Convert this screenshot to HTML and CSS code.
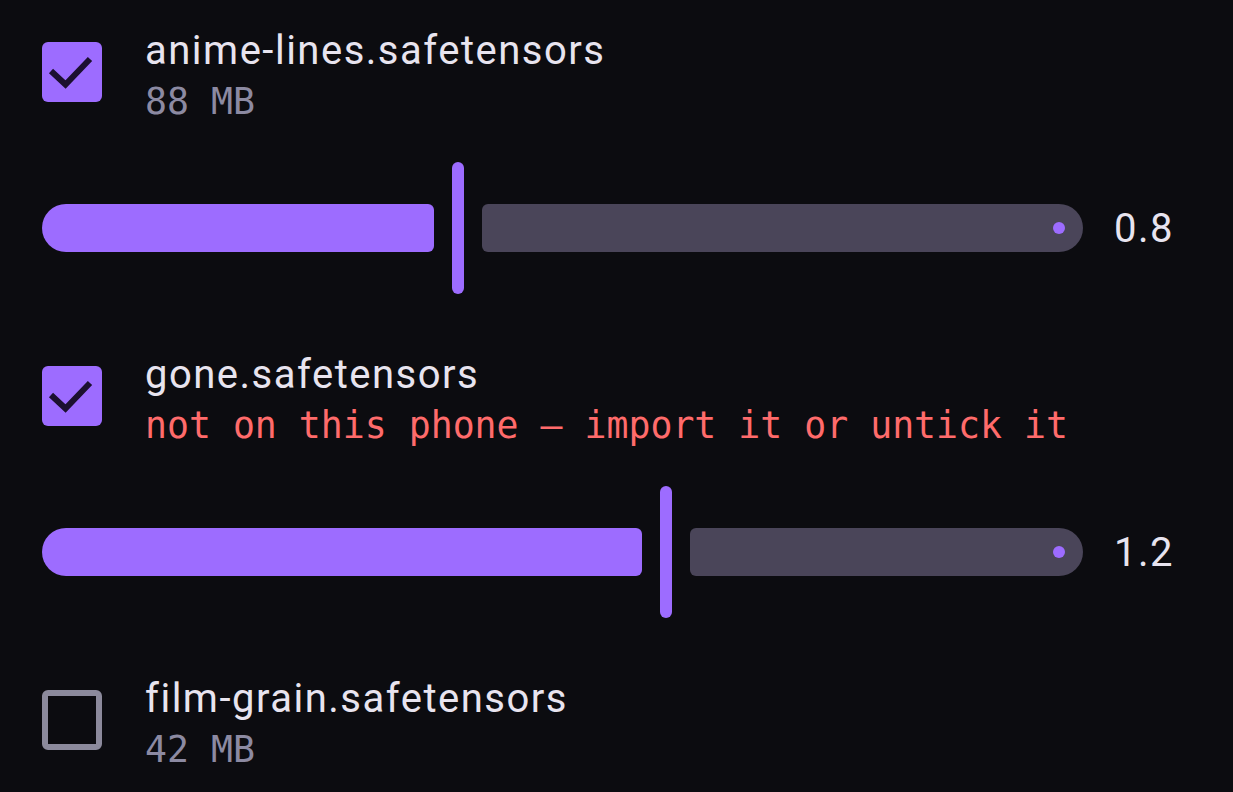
FILE: index.html
```html
<!DOCTYPE html>
<html>
<head>
<meta charset="utf-8">
<link rel="stylesheet" href="styles.css">
</head>
<body>
<div class="list">
  <div class="item">
    <div class="row">
      <div class="box checked">
        <svg viewBox="0 0 60 60" width="60" height="60"><path d="M9 29 L23.5 42.5 L48 17" fill="none" stroke="#1c1030" stroke-width="6"/></svg>
      </div>
      <div class="text">
        <div class="title">anime-lines.safetensors</div>
        <div class="sub">88 MB</div>
      </div>
    </div>
    <div class="slider">
      <div class="track">
        <div class="active" style="width:392px"></div>
        <div class="thumb"></div>
        <div class="inactive"><span class="stop"></span></div>
      </div>
      <div class="value">0.8</div>
    </div>
  </div>

  <div class="item">
    <div class="row">
      <div class="box checked">
        <svg viewBox="0 0 60 60" width="60" height="60"><path d="M9 29 L23.5 42.5 L48 17" fill="none" stroke="#1c1030" stroke-width="6"/></svg>
      </div>
      <div class="text">
        <div class="title">gone.safetensors</div>
        <div class="sub error">not on this phone — import it or untick it</div>
      </div>
    </div>
    <div class="slider">
      <div class="track">
        <div class="active" style="width:600px"></div>
        <div class="thumb"></div>
        <div class="inactive"><span class="stop"></span></div>
      </div>
      <div class="value">1.2</div>
    </div>
  </div>

  <div class="item">
    <div class="row">
      <div class="box"></div>
      <div class="text">
        <div class="title">film-grain.safetensors</div>
        <div class="sub">42 MB</div>
      </div>
    </div>
  </div>
</div>
</body>
</html>
```

FILE: styles.css
```css
html, body {
  margin: 0;
  padding: 0;
  background: #0c0c10;
  height: 100%;
  overflow: hidden;
}
.list {
  padding: 27px 0 0 42px;
  display: flex;
  flex-direction: column;
  gap: 57px;
}
.item {
  display: flex;
  flex-direction: column;
  gap: 36px;
}
.row {
  display: flex;
  align-items: flex-start;
  gap: 43px;
}
.box {
  width: 60px;
  height: 60px;
  margin-top: 15px;
  box-sizing: border-box;
  border-radius: 6px;
  border: 6px solid #8c8a9c;
  flex: none;
}
.box.checked {
  border: none;
  background: #9d6cff;
}
.box svg {
  display: block;
}
.text {
  display: flex;
  flex-direction: column;
}
.title {
  font-family: Roboto, "Noto Sans", sans-serif;
  font-size: 40px;
  letter-spacing: 1.5px;
  line-height: 48px;
  color: #e8e4ef;
}
.sub {
  font-family: "DejaVu Sans Mono", monospace;
  font-size: 36.5px;
  line-height: 48px;
  padding-top: 3px;
  color: #8c8aa2;
}
.sub.error {
  color: #ff6b6b;
}
.slider {
  display: flex;
  align-items: center;
  padding-right: 41px;
}
.track {
  flex: 1;
  height: 132px;
  display: flex;
  align-items: center;
}
.active {
  height: 48px;
  background: #9d6cff;
  border-radius: 24px 6px 6px 24px;
  flex: none;
}
.thumb {
  width: 12px;
  height: 132px;
  border-radius: 6px;
  background: #9d6cff;
  margin: 0 18px;
  flex: none;
}
.inactive {
  flex: 1;
  height: 48px;
  background: #4a4559;
  border-radius: 6px 24px 24px 6px;
  display: flex;
  align-items: center;
  justify-content: flex-end;
  padding-right: 18px;
  box-sizing: border-box;
}
.stop {
  width: 12px;
  height: 12px;
  border-radius: 50%;
  background: #9d6cff;
}
.value {
  width: 78px;
  margin-left: 31px;
  font-family: Roboto, "Noto Sans", sans-serif;
  font-size: 40px;
  letter-spacing: 1.5px;
  color: #e8e4ef;
}
```
